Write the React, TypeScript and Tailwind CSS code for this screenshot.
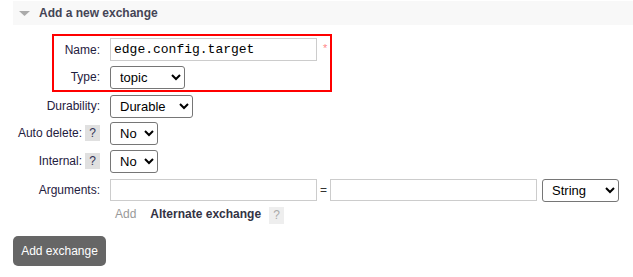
import { useState } from "react";

const font = { fontFamily: '"Liberation Sans", Arial, sans-serif' };

function Help({ faded }: { faded?: boolean }) {
  return (
    <span
      className={
        faded
          ? "inline-flex h-[17px] w-[15px] items-center justify-center bg-[#eeeeee] text-[12px] text-[#aaaaaa]"
          : "inline-flex h-[16px] w-[15px] items-center justify-center bg-[#e0e0e0] text-[12px] text-[#333355]"
      }
    >
      ?
    </span>
  );
}

function Select({ w, value, options }: { w: string; value: string; options: string[] }) {
  const [v, setV] = useState(value);
  return (
    <select
      value={v}
      onChange={(e) => setV(e.target.value)}
      className={`${w} h-[23px] rounded-[3px] border border-[#767676] bg-white pl-[5px] text-[13px] text-black`}
    >
      {options.map((o) => (
        <option key={o}>{o}</option>
      ))}
    </select>
  );
}

export default function App() {
  return (
    <div className="h-[277px] w-[633px] bg-white pl-[13px] text-[#1f2040]" style={font}>
      {/* header */}
      <div className="mt-[1px] flex h-[24px] items-center bg-[#f8f8f8] pl-[6px]">
        <svg width="11" height="6" viewBox="0 0 11 6" className="mr-[9px] mt-[1px]">
          <polygon points="0,0 11,0 5.5,5" fill="#aaaaaa" />
        </svg>
        <span className="text-[12px] font-bold text-[#444455]">Add a new exchange</span>
      </div>

      {/* required fields */}
      <div className="ml-[39px] mt-[9px] w-[280px] border-2 border-[#ff0000]">
        <div className="flex h-[27px] items-center">
          <label className="w-[46px] text-right text-[12px]">Name:</label>
          <input
            defaultValue="edge.config.target"
            className="ml-[10px] h-[23px] w-[207px] border border-[#cccccc] pl-[3px] text-[13px] text-black"
            style={{ fontFamily: '"Liberation Mono", "Courier New", monospace' }}
          />
          <span className="ml-[6px] mb-[3px] text-[11px] text-[#ff8888]">*</span>
        </div>
        <div className="flex h-[27px] items-center">
          <label className="w-[46px] text-right text-[12px]">Type:</label>
          <span className="ml-[10px]">
            <Select w="w-[75px]" value="topic" options={["direct", "fanout", "headers", "topic"]} />
          </span>
        </div>
      </div>

      <div className="flex h-[27px] items-center">
        <label className="w-[87px] text-right text-[12px]">Durability:</label>
        <span className="ml-[10px]">
          <Select w="w-[83px]" value="Durable" options={["Durable", "Transient"]} />
        </span>
      </div>

      <div className="flex h-[28px] items-center">
        <div className="flex w-[87px] items-center justify-end gap-[3px]">
          <label className="text-[12px]">Auto delete:</label>
          <Help />
        </div>
        <span className="ml-[10px]">
          <Select w="w-[48px]" value="No" options={["No", "Yes"]} />
        </span>
      </div>

      <div className="flex h-[28px] items-center">
        <div className="flex w-[87px] items-center justify-end gap-[3px]">
          <label className="text-[12px]">Internal:</label>
          <Help />
        </div>
        <span className="ml-[10px]">
          <Select w="w-[48px]" value="No" options={["No", "Yes"]} />
        </span>
      </div>

      <div className="flex h-[29px] items-center">
        <label className="w-[87px] text-right text-[12px]">Arguments:</label>
        <input className="ml-[10px] h-[22px] w-[207px] border border-[#cccccc]" />
        <span className="mx-[3px] text-[12px] text-[#333]">=</span>
        <input className="h-[22px] w-[207px] border border-[#cccccc]" />
        <span className="ml-[5px]">
          <Select w="w-[77px]" value="String" options={["String", "Number", "Boolean", "List"]} />
        </span>
      </div>

      <div className="flex h-[20px] items-center pl-[102px]">
        <span className="text-[12px] text-[#999999]">Add</span>
        <span className="ml-[14px] text-[12px] font-bold text-[#333344]">Alternate exchange</span>
        <span className="ml-[8px]">
          <Help faded />
        </span>
      </div>

      <button className="mt-[12px] h-[30px] w-[93px] rounded-[5px] bg-[#666666] text-[12px] text-white">
        Add exchange
      </button>
    </div>
  );
}
